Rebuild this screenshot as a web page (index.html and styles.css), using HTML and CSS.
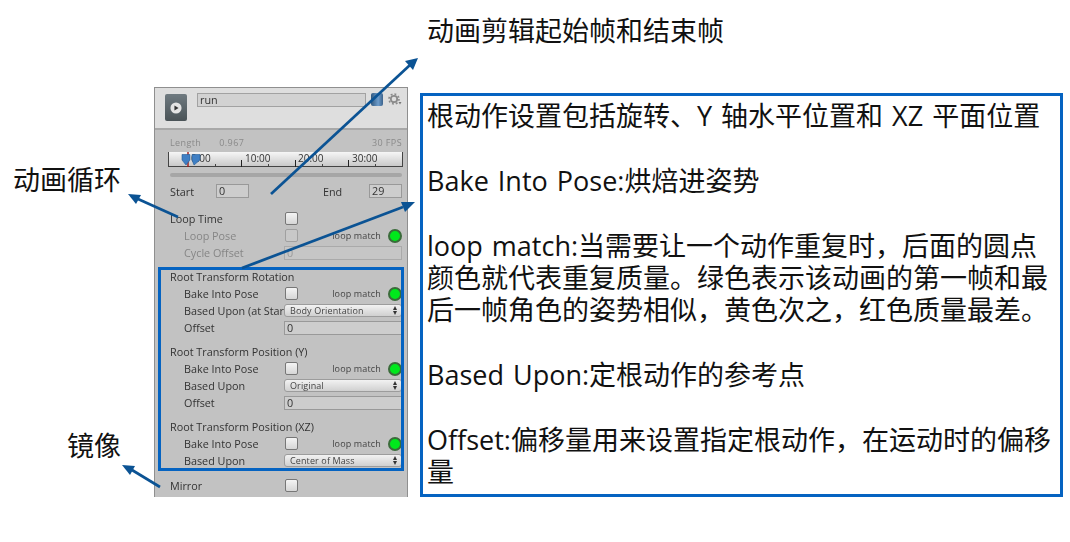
FILE: index.html
```html
<!DOCTYPE html>
<html>
<head>
    <meta charset="utf-8">
    <link rel="stylesheet" href="styles.css">
</head>
<body>
    <div id="canvas">
        <!-- Callouts -->
        <div class="callout" id="callout-clip">动画剪辑起始帧和结束帧</div>
        <div class="callout" id="callout-loop">动画循环</div>
        <div class="callout" id="callout-mirror">镜像</div>

        <!-- Inspector Panel -->
        <div id="inspector">
            <div id="clip-header">
                <div id="play-icon">
                    <svg width="12" height="12" viewBox="0 0 14 14"><circle cx="7" cy="7" r="6.5" fill="#e4e4e4"/><path d="M5.2 4 L10 7 L5.2 10 Z" fill="#333"/></svg>
                </div>
                <div id="clip-name">run</div>
                <div id="clip-book"></div>
                <svg id="gear" width="14" height="14" viewBox="0 0 14 14">
                    <circle cx="6" cy="6" r="3.2" fill="none" stroke="#8a8a8a" stroke-width="1.8"/>
                    <circle cx="6" cy="6" r="5" fill="none" stroke="#8a8a8a" stroke-width="1.6" stroke-dasharray="1.9 2"/>
                    <path d="M10.5 9 L13.5 9 L12 11.5 Z" fill="#777"/>
                </svg>
            </div>

            <div id="clip-body">
                <div class="info-row"><span class="info-length">Length</span><span class="info-value">0.967</span><span class="info-fps">30 FPS</span></div>

                <svg id="timeline" width="235" height="15" viewBox="0 0 235 15">
                    <defs>
                        <linearGradient id="ruler-bg" x1="0" y1="0" x2="0" y2="1">
                            <stop offset="0" stop-color="#f6f6f6"/>
                            <stop offset="1" stop-color="#c6c6c6"/>
                        </linearGradient>
                    </defs>
                    <rect width="235" height="15" fill="url(#ruler-bg)"/>
                    <path d="M0.5 0V15M234.5 0V15M0 14.5H235" stroke="#444" fill="none"/>
                    <path d="M73.5 8V15M127.5 8V15M180.5 8V15" stroke="#222"/>
                    <path d="M47.5 12V15M100.5 12V15M154.5 12V15M207.5 12V15" stroke="#444"/>
                    <text x="23" y="10" class="ruler-text">0:00</text>
                    <text x="77" y="10" class="ruler-text">10:00</text>
                    <text x="130" y="10" class="ruler-text">20:00</text>
                    <text x="184" y="10" class="ruler-text">30:00</text>
                    <path d="M20 0V15" stroke="#a01818" stroke-width="1.4"/>
                    <path d="M14 2.5H22V8L18 13L14 8Z" fill="#3f7fc4" stroke="#245a94" stroke-width=".6"/>
                    <path d="M24 2.5H32V8L26 13L24 8Z" fill="#3f7fc4" stroke="#245a94" stroke-width=".6"/>
                </svg>

                <div id="scrollbar"></div>

                <div id="range-row">
                    <span class="range-label">Start</span>
                    <div class="field range-field">0</div>
                    <span class="range-label range-end">End</span>
                    <div class="field range-field">29</div>
                </div>

                <div class="row">
                    <span class="label">Loop Time</span>
                    <span class="checkbox"></span>
                </div>
                <div class="row sub disabled">
                    <span class="label">Loop Pose</span>
                    <span class="checkbox"></span>
                    <span class="match">loop match</span>
                    <span class="dot"></span>
                </div>
                <div class="row sub disabled">
                    <span class="label">Cycle Offset</span>
                    <div class="field wide">0</div>
                </div>

                <div class="group">
                    <div class="row heading">Root Transform Rotation</div>
                    <div class="row sub">
                        <span class="label">Bake Into Pose</span>
                        <span class="checkbox"></span>
                        <span class="match">loop match</span>
                        <span class="dot"></span>
                    </div>
                    <div class="row sub">
                        <span class="label">Based Upon (at Star</span>
                        <div class="select">Body Orientation</div>
                    </div>
                    <div class="row sub">
                        <span class="label">Offset</span>
                        <div class="field wide">0</div>
                    </div>
                </div>

                <div class="group">
                    <div class="row heading">Root Transform Position (Y)</div>
                    <div class="row sub">
                        <span class="label">Bake Into Pose</span>
                        <span class="checkbox"></span>
                        <span class="match">loop match</span>
                        <span class="dot"></span>
                    </div>
                    <div class="row sub">
                        <span class="label">Based Upon</span>
                        <div class="select">Original</div>
                    </div>
                    <div class="row sub">
                        <span class="label">Offset</span>
                        <div class="field wide">0</div>
                    </div>
                </div>

                <div class="group">
                    <div class="row heading">Root Transform Position (XZ)</div>
                    <div class="row sub">
                        <span class="label">Bake Into Pose</span>
                        <span class="checkbox"></span>
                        <span class="match">loop match</span>
                        <span class="dot"></span>
                    </div>
                    <div class="row sub">
                        <span class="label">Based Upon</span>
                        <div class="select">Center of Mass</div>
                    </div>
                </div>

                <div class="group group-mirror">
                    <div class="row">
                        <span class="label">Mirror</span>
                        <span class="checkbox"></span>
                    </div>
                </div>
            </div>
        </div>

        <!-- Highlight around the root transform rows -->
        <div id="root-highlight"></div>

        <!-- Arrows over the panel -->
        <svg id="arrows" width="1070" height="542" viewBox="0 0 1070 542">
            <g stroke="#0b5394" stroke-width="2.7" fill="none">
                <path d="M271 194 L410 65"/>
                <path d="M178 217 L138 199"/>
                <path d="M242 268 L403 207"/>
                <path d="M160 487 L132 470"/>
            </g>
            <g fill="#0b5394">
                <path d="M418 58 L413 70 L405 61 Z"/>
                <path d="M128 194 L141 195 L136 204 Z"/>
                <path d="M415 202 L405 212 L401 202 Z"/>
                <path d="M122 465 L135 466 L130 475 Z"/>
            </g>
        </svg>

        <!-- Notes -->
        <div id="notes">
            <p>根动作设置包括旋转、Y 轴水平位置和 XZ 平面位置</p>
            <p>Bake Into Pose:烘焙进姿势</p>
            <p>loop match:当需要让一个动作重复时，后面的圆点<br>颜色就代表重复质量。绿色表示该动画的第一帧和最<br>后一帧角色的姿势相似，黄色次之，红色质量最差。</p>
            <p>Based Upon:定根动作的参考点</p>
            <p>Offset:偏移量用来设置指定根动作，在运动时的偏移<br>量</p>
        </div>
    </div>
</body>
</html>
```

FILE: styles.css
```css
/* Global Styles */
body {
    margin: 0;
    background-color: #ffffff;
    font-family: "Open Sans", "Noto Sans CJK SC", sans-serif;
}

#canvas {
    position: relative;
    width: 1070px;
    height: 542px;
    overflow: hidden;
}

/* Callouts */
.callout {
    position: absolute;
    font-size: 27px;
    line-height: 34px;
    color: #111111;
    white-space: nowrap;
}

#callout-clip {
    left: 427px;
    top: 14px;
}

#callout-loop {
    left: 13px;
    top: 163px;
}

#callout-mirror {
    left: 67px;
    top: 429px;
}

/* Inspector Panel */
#inspector {
    position: absolute;
    left: 154px;
    top: 87px;
    width: 254px;
    height: 410px;
    box-sizing: border-box;
    border: 1px solid #8f8f8f;
    border-bottom: none;
    background-color: #c2c2c2;
    font-size: 10.8px;
    color: #333333;
    filter: blur(0.35px);
}

#clip-header {
    display: flex;
    align-items: flex-start;
    height: 42px;
    box-sizing: border-box;
    padding: 5px 0 0 10px;
    background-color: #dedede;
    border-bottom: 2px solid #a8a8a8;
}

#play-icon {
    display: flex;
    align-items: center;
    justify-content: center;
    width: 22px;
    height: 27px;
    margin-top: 1px;
    border-radius: 2px;
    background: linear-gradient(#6f7a80, #4a5357);
}

#clip-name {
    width: 169px;
    height: 14px;
    box-sizing: border-box;
    margin-left: 10px;
    padding-left: 2px;
    line-height: 12px;
    background-color: #d2d2d2;
    border: 1px solid #a2a2a2;
}

#clip-book {
    width: 12px;
    height: 13px;
    margin-left: 5px;
    border-radius: 2px;
    background: linear-gradient(90deg, #30587f, #6d9ccb 60%, #3c638c);
}

#gear {
    margin-left: 5px;
}

#clip-body {
    padding: 6px 5px 0 15px;
}

.info-row {
    display: flex;
    height: 14px;
    line-height: 14px;
    font-size: 9px;
    letter-spacing: 0.4px;
    color: #8a8a8a;
}

.info-value {
    margin-left: 18px;
}

.info-fps {
    margin-left: auto;
}

#timeline {
    display: block;
    margin: 2px 0 0 -2px;
    overflow: visible;
}

.ruler-text {
    font-family: "Open Sans", sans-serif;
    font-size: 10px;
    fill: #333333;
}

#scrollbar {
    height: 4px;
    margin-top: 6px;
    border-radius: 2px;
    background-color: #a6a6a6;
}

#range-row {
    display: flex;
    align-items: center;
    height: 14px;
    margin: 7px 0 12px;
}

.range-label {
    width: 46px;
}

.range-end {
    margin-left: auto;
}

/* Form Rows */
.row {
    display: flex;
    align-items: center;
    height: 17px;
    white-space: nowrap;
}

.row .label {
    flex: none;
    width: 114px;
    overflow: hidden;
}

.row.sub {
    padding-left: 14px;
}

.row.sub .label {
    width: 100px;
}

.row.disabled {
    color: #868686;
}

.group {
    margin-top: 7px;
}

.group-mirror {
    margin-top: 8px;
}

.checkbox {
    flex: none;
    width: 11px;
    height: 11px;
    margin-left: 1px;
    border: 1px solid #777777;
    border-radius: 2px;
    background: linear-gradient(#f4f4f4, #d6d6d6);
}

.disabled .checkbox {
    border-color: #a0a0a0;
    background: #c8c8c8;
}

.match {
    margin-left: auto;
    color: #444444;
    font-size: 9px;
    letter-spacing: 0.15px;
}

.dot {
    flex: none;
    width: 10px;
    height: 10px;
    margin-left: 7px;
    border: 2px solid #3a6b3a;
    border-radius: 50%;
    background-color: #00e81c;
}

.field {
    box-sizing: border-box;
    height: 14px;
    padding-left: 2px;
    line-height: 12px;
    background-color: #cdcdcd;
    border: 1px solid #999999;
}

.range-field {
    width: 33px;
}

.field.wide {
    flex: 1;
}

.disabled .field {
    color: #9a9a9a;
    background-color: #c6c6c6;
    border-color: #aaaaaa;
}

.select {
    position: relative;
    flex: 1;
    box-sizing: border-box;
    height: 13px;
    padding-left: 5px;
    font-size: 9px;
    line-height: 12px;
    letter-spacing: 0.12px;
    color: #444444;
    border-radius: 3px;
    border: 1px solid #9c9c9c;
    background: linear-gradient(#f2f2f2, #d0d0d0);
}

.select::after,
.select::before {
    content: "";
    position: absolute;
    right: 4px;
    width: 0;
    height: 0;
    border-left: 2.5px solid transparent;
    border-right: 2.5px solid transparent;
}

.select::after {
    top: 1px;
    border-bottom: 4px solid #333333;
}

.select::before {
    top: 6px;
    border-top: 4px solid #333333;
}

/* Overlays */
#root-highlight {
    position: absolute;
    left: 158px;
    top: 267px;
    width: 246px;
    height: 204px;
    box-sizing: border-box;
    border: 3px solid #0563c1;
}

#arrows {
    position: absolute;
    left: 0;
    top: 0;
}

/* Notes */
#notes {
    position: absolute;
    left: 420px;
    top: 93px;
    width: 643px;
    height: 404px;
    box-sizing: border-box;
    padding: 4px 0 0 4px;
    border: 3px solid #0563c1;
    font-size: 27px;
    line-height: 32.4px;
    word-spacing: 2px;
    color: #111111;
    white-space: nowrap;
}

#notes p {
    margin: 0 0 32.4px;
}
```
